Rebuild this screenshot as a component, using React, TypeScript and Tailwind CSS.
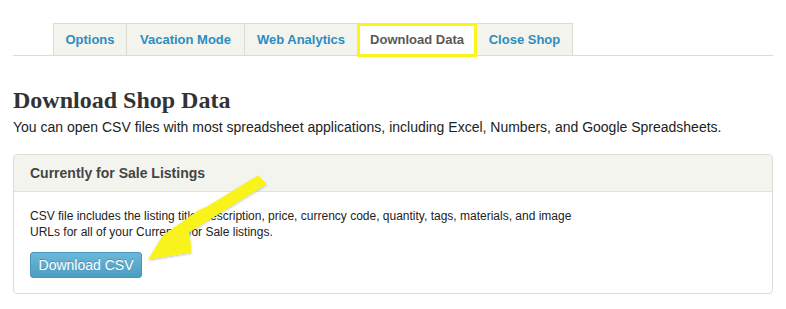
const tabs = [
  { label: "Options", width: "w-[74px]" },
  { label: "Vacation Mode", width: "w-[118px]" },
  { label: "Web Analytics", width: "w-[113px]" },
  { label: "Download Data", width: "w-[119px]", active: true },
  { label: "Close Shop", width: "w-[96px]" },
];

function Tabs() {
  return (
    <div className="flex border-b border-[#dcdcd6] pl-[40px]">
      {tabs.map((tab, i) => (
        <div
          key={tab.label}
          className={`relative flex h-[32px] items-center justify-center border-t border-r border-[#dcdcd6] text-[13px] font-bold ${
            tab.width
          } ${i === 0 ? "border-l" : ""} ${
            tab.active ? "bg-white text-[#595959]" : "bg-[#f4f4ef] text-[#2b8dc1]"
          }`}
        >
          {tab.label}
          {/* highlight box from the annotation */}
          {tab.active && (
            <span className="pointer-events-none absolute -top-[1px] -bottom-[2px] -left-[1px] -right-[1px] border-[3px] border-[#fbf51c]" />
          )}
        </div>
      ))}
    </div>
  );
}

function Arrow() {
  return (
    <svg
      className="pointer-events-none absolute left-0 top-0"
      width="786"
      height="309"
      viewBox="0 0 786 309"
    >
      <defs>
        <filter id="shadow" x="-20%" y="-20%" width="140%" height="140%">
          <feDropShadow dx="0" dy="1" stdDeviation="1" floodColor="#000" floodOpacity="0.25" />
        </filter>
      </defs>
      <polygon
        points="258,176 266,184 189,232 191,252 149,259 163,236 198,211 207,207"
        fill="#f9f31b"
        stroke="#f9f31b"
        strokeWidth="1"
        strokeLinejoin="round"
        filter="url(#shadow)"
      />
    </svg>
  );
}

export default function App() {
  return (
    <div
      className="relative h-[309px] w-[786px] overflow-hidden bg-white px-[13px] pt-[23px] text-[#333]"
      style={{ fontFamily: '"Liberation Sans", Arial, sans-serif' }}
    >
      <Tabs />

      <h1
        className="mt-[30px] text-[24px] font-bold leading-[28px] text-[#333]"
        style={{ fontFamily: '"Liberation Serif", "DejaVu Serif", serif' }}
      >
        Download Shop Data
      </h1>
      <p className="mt-[4px] text-[14px] leading-[18px] text-[#222]">
        You can open CSV files with most spreadsheet applications, including Excel, Numbers, and
        Google Spreadsheets.
      </p>

      <div className="mt-[18px] rounded-[4px] border border-[#dcdcd6]">
        <div className="flex h-[37px] items-center rounded-t-[4px] border-b border-[#e2e2dc] bg-[#f4f4ef] px-4 text-[14px] font-bold text-[#444]">
          Currently for Sale Listings
        </div>
        <div className="px-4 pt-4 pb-[15px]">
          <p className="text-[12px] leading-[16px] text-[#222]">
            CSV file includes the listing title, description, price, currency code, quantity, tags,
            materials, and image
            <br />
            URLs for all of your Currently for Sale listings.
          </p>
          <button className="mt-[12px] flex h-[26px] w-[112px] items-center justify-center rounded-[3px] border border-[#4a95bb] bg-gradient-to-b from-[#6ab8d9] to-[#4c9dc3] text-[14px] text-white [text-shadow:0_-1px_0_rgba(0,0,0,0.2)]">
            Download CSV
          </button>
        </div>
      </div>

      <Arrow />
    </div>
  );
}
